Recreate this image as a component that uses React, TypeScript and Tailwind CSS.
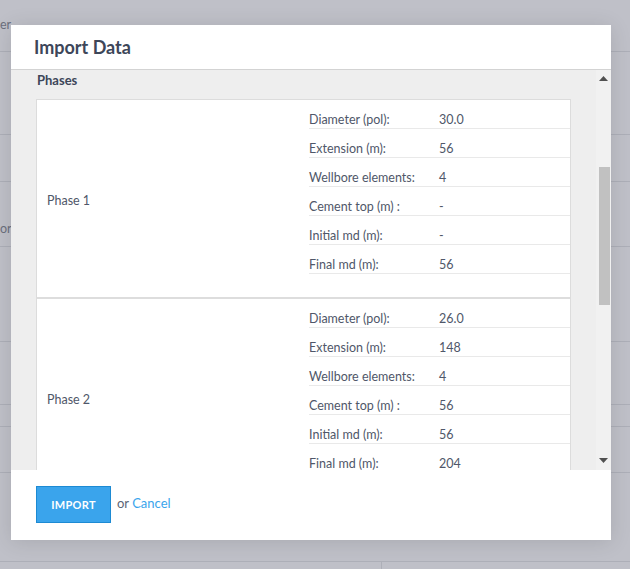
import React from "react";

interface Phase {
    name: string;
    rows: [string, string][];
}

const phases: Phase[] = [
    {
        name: "Phase 1",
        rows: [
            ["Diameter (pol):", "30.0"],
            ["Extension (m):", "56"],
            ["Wellbore elements:", "4"],
            ["Cement top (m) :", "-"],
            ["Initial md (m):", "-"],
            ["Final md (m):", "56"],
        ],
    },
    {
        name: "Phase 2",
        rows: [
            ["Diameter (pol):", "26.0"],
            ["Extension (m):", "148"],
            ["Wellbore elements:", "4"],
            ["Cement top (m) :", "56"],
            ["Initial md (m):", "56"],
            ["Final md (m):", "204"],
        ],
    },
];

// background page rows behind the overlay
const bgRows = [52, 83, 47, 65, 95, 63, 22, 46, 89];

const App: React.FC = () => {
    return (
        <div
            className="relative w-[630px] h-[569px] overflow-hidden bg-[#bfc0c8] text-[12.5px] text-[#4f5769]"
            style={{ fontFamily: "Lato, 'Noto Sans', sans-serif" }}
        >
            {/* dimmed page */}
            <div className="flex flex-col">
                {bgRows.map((h, i) => (
                    <div key={i} className="relative border-b border-[#adafb8] text-[#6b6f7d]" style={{ height: h }}>
                        {i === 0 && <span className="block pt-[16px]">er</span>}
                        {i === 3 && <span className="block pt-[38px]">or</span>}
                        {i === 8 && (
                            <div className="flex h-full">
                                <div className="w-[170px] h-[22px] border-r border-[#adafb8] mt-[45px]" />
                            </div>
                        )}
                    </div>
                ))}
                <div className="flex h-[10px]">
                    <div className="w-[382px] border-r border-[#adafb8]" />
                </div>
            </div>

            {/* modal */}
            <div className="absolute left-[11px] top-[25px] w-[600px] h-[515px] bg-white flex flex-col shadow-[0_2px_20px_rgba(0,0,0,0.12)]">
                <div className="h-[45px] shrink-0 border-b border-[#d3d3d3] pl-[23px] flex items-center">
                    <h2 className="text-[18px] font-bold text-[#3d4659] leading-none -mt-[1px]">Import Data</h2>
                </div>

                <div className="h-[400px] shrink-0 flex bg-[#eeeeee] overflow-hidden">
                    <div className="flex-1 pl-[25px] pr-[25px] pt-[2px]">
                        <h3 className="font-bold text-[13px] leading-4 text-[#3d4659] pl-[1px] mb-[11px]">Phases</h3>
                        <div className="bg-white border border-[#dcdcdc]">
                            {phases.map((p, i) => (
                                <div
                                    key={p.name}
                                    className={`flex ${i === 0 ? "border-b-2 border-[#dddddd]" : ""}`}
                                >
                                    <div className="w-[272px] shrink-0 pl-[10px] pt-[6px] flex items-center">{p.name}</div>
                                    <div className="flex-1 pb-[23px]">
                                        {p.rows.map(([label, value]) => (
                                            <div
                                                key={label}
                                                className="flex h-[29px] pt-[12px] leading-4 border-b border-[#e9e9e9]"
                                            >
                                                <span className="w-[130px] shrink-0">{label}</span>
                                                <span>{value}</span>
                                            </div>
                                        ))}
                                    </div>
                                </div>
                            ))}
                        </div>
                    </div>

                    {/* scrollbar */}
                    <div className="w-[15px] shrink-0 bg-[#f1f1f1] flex flex-col items-center">
                        <svg width="9" height="5" viewBox="0 0 9 5" className="mt-[6px]">
                            <path d="M4.5 0L9 5H0z" fill="#505050" />
                        </svg>
                        <div className="w-[11px] h-[138px] bg-[#c1c1c1] mt-[86px] ml-[2px]" />
                        <div className="flex-1" />
                        <svg width="9" height="5" viewBox="0 0 9 5" className="mb-[7px]">
                            <path d="M0 0H9L4.5 5z" fill="#505050" />
                        </svg>
                    </div>
                </div>

                <div className="flex-1 flex items-start pt-[16px] pl-[25px]">
                    <button className="w-[75px] h-[37px] pt-[2px] bg-[#3aa4ec] border border-[#1d8ad3] text-white text-[11px] font-bold tracking-[0.3px]">
                        IMPORT
                    </button>
                    <span className="ml-[6px] mt-[8px] text-[13px] text-[#5c6475]">
                        or <a href="#" className="text-[#3aa4ec]">Cancel</a>
                    </span>
                </div>
            </div>
        </div>
    );
};

export default App;
